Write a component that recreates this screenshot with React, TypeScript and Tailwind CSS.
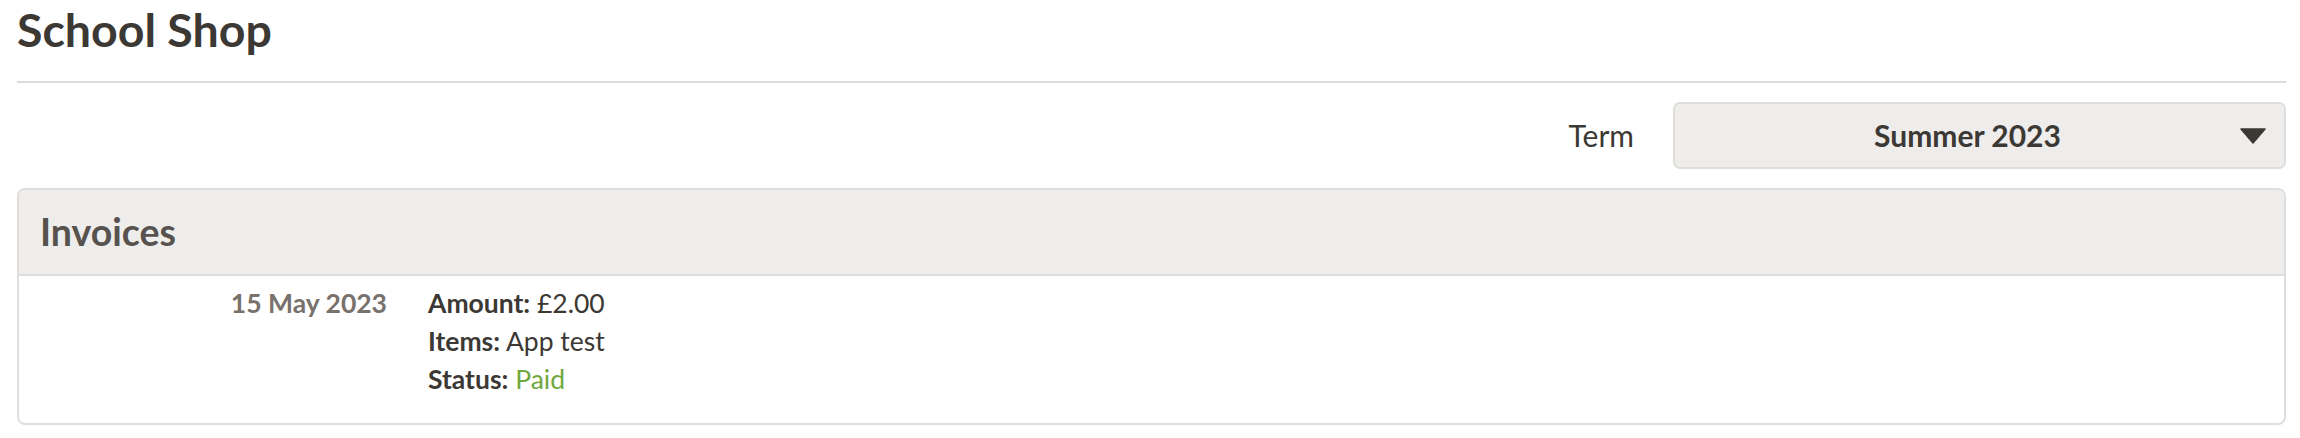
import { useState } from 'react';

interface Invoice {
  date: string;
  amount: string;
  items: string;
  status: string;
}

const invoices: Invoice[] = [{ date: '15 May 2023', amount: '£2.00', items: 'App test', status: 'Paid' }];

export default function App() {
  const [term] = useState('Summer 2023');

  return (
    <div className="min-h-screen bg-white pl-[17px] pr-[14px] text-[#3c3834]" style={{ fontFamily: 'Lato, "Open Sans", sans-serif' }}>
      {/* Page title */}
      <h1 className="pt-[2px] text-[46.5px] font-bold leading-[55px] text-[#3c3834]">School Shop</h1>
      <div className="mt-[24px] h-[2px] bg-[#dddcdb]" />

      {/* Term picker */}
      <div className="mt-[19px] flex items-center justify-end">
        <span className="text-[30px] text-[#3c3834]">Term</span>
        <div className="ml-[39px] flex h-[67px] w-[613px] items-center rounded-[7px] border-2 border-[#dfdedc] bg-[#eeedeb] pl-[20px] pr-[18px]">
          <span className="flex-1 text-center text-[30px] font-bold text-[#3c3834]">{term}</span>
          <svg width="26" height="16" viewBox="0 0 26 16" className="shrink-0">
            <path d="M1 1 L25 1 L13 15 Z" fill="#3c3834" stroke="#3c3834" strokeWidth="1.5" strokeLinejoin="round" />
          </svg>
        </div>
      </div>

      {/* Invoices card */}
      <div className="mt-[19px] overflow-hidden rounded-[8px] border-2 border-[#dfdedc]">
        <div className="flex h-[86px] items-center border-b-2 border-[#dfdedc] bg-[#eeedeb] px-[21px]">
          <h2 className="text-[37.5px] font-bold text-[#57524e]">Invoices</h2>
        </div>
        {invoices.map((inv, i) => (
          <div key={i} className="flex items-start pt-[8px] pb-[25px] text-[26.5px] leading-[38px]">
            <div className="w-[368px] text-right font-bold text-[#78716c]">{inv.date}</div>
            <div className="ml-[41px]">
              <p>
                <span className="font-bold">Amount:</span> {inv.amount}
              </p>
              <p>
                <span className="font-bold">Items:</span> {inv.items}
              </p>
              <p>
                <span className="font-bold">Status:</span> <span className="text-[#6fa83e]">{inv.status}</span>
              </p>
            </div>
          </div>
        ))}
      </div>
    </div>
  );
}
